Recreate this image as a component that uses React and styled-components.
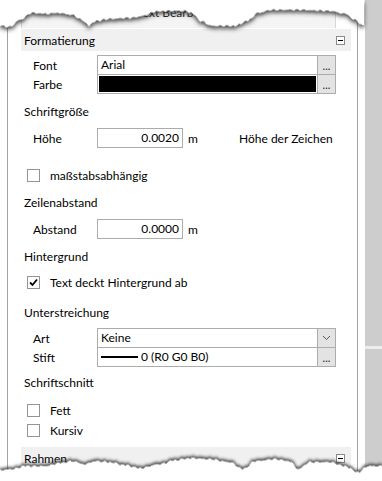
import React from 'react';
import styled, { createGlobalStyle } from 'styled-components';

const GlobalStyle = createGlobalStyle`
  html, body { margin: 0; padding: 0; background: #fff; }
  body {
    font-family: Lato, "Noto Sans", sans-serif;
    font-size: 12px;
    color: #000;
  }
`;

const Screen = styled.div`
  position: relative;
  width: 382px;
  height: 481px;
  overflow: hidden;
  background: #fff;
  display: flex;
`;

const Panel = styled.div`
  margin-left: 7px;
  width: 351px;
  box-sizing: border-box;
  border-left: 1px solid #a3a3a3;
  border-right: 1px solid #a3a3a3;
  padding: 0 6px 0 13px;
  display: flex;
  flex-direction: column;
`;

const TabStrip = styled.div`
  height: 29px;
  display: flex;
  align-items: flex-start;
`;

const Tab = styled.div`
  margin-top: 4px;
  width: 315px;
  height: 24px;
  box-sizing: border-box;
  border: 1px solid #d6d6d6;
  border-bottom: none;
  background: #f4f4f4;
  line-height: 16px;
  text-align: center;
  color: #222;
`;

const SectionHeader = styled.div`
  height: 22px;
  margin-top: ${p => p.$top || 0}px;
  background: #f0f0f0;
  display: flex;
  align-items: center;
  justify-content: space-between;
  padding: 0 6px 0 3px;
  flex-shrink: 0;
`;

const GroupTitle = styled.div`
  height: 20px;
  line-height: 20px;
  padding-left: 3px;
  margin-top: ${p => p.$top}px;
  flex-shrink: 0;
`;

const FieldGroup = styled.div`
  margin-top: ${p => p.$top}px;
  display: flex;
  flex-direction: column;
  flex-shrink: 0;
`;

const Row = styled.div`
  height: 20px;
  display: flex;
  align-items: center;
  margin-top: ${p => p.$top || 0}px;
  flex-shrink: 0;
  & + & { margin-top: -1px; }
`;

const Label = styled.div`
  width: 76px;
  box-sizing: border-box;
  padding-left: 12px;
  flex-shrink: 0;
`;

const FieldBox = styled.div`
  width: 239px;
  height: 20px;
  box-sizing: border-box;
  border: 1px solid #acacac;
  display: flex;
  background: #fff;
`;

const Value = styled.div`
  flex: 1;
  padding: ${p => (p.$fill ? '1px' : '0 3px')};
  line-height: 18px;
  display: flex;
  align-items: center;
  gap: 3px;
  overflow: hidden;
  white-space: nowrap;
`;

const ColorFill = styled.div`
  flex: 1;
  align-self: stretch;
  background: ${p => p.$color};
`;

const PenLine = styled.div`
  width: 37px;
  height: 2px;
  background: #000;
  flex-shrink: 0;
`;

const SideButton = styled.div`
  width: 18px;
  flex-shrink: 0;
  box-sizing: border-box;
  border-left: 1px solid #acacac;
  background: #e3e3e3;
  display: flex;
  align-items: center;
  justify-content: center;
  font-size: 11px;
  line-height: 1;
  color: #222;
`;

const NumberBox = styled.div`
  width: 86px;
  height: 20px;
  box-sizing: border-box;
  border: 1px solid #acacac;
  text-align: right;
  padding-right: 3px;
  line-height: 18px;
  flex-shrink: 0;
`;

const Unit = styled.div`
  width: 56px;
  box-sizing: border-box;
  padding-left: 5px;
  flex-shrink: 0;
`;

const Hint = styled.div`
  white-space: nowrap;
`;

const CheckRow = styled.div`
  height: 20px;
  display: flex;
  align-items: center;
  padding-left: 6px;
  margin-top: ${p => p.$top || 0}px;
  flex-shrink: 0;
`;

const Box = styled.div`
  width: 13px;
  height: 13px;
  box-sizing: border-box;
  border: 1px solid #949494;
  background: #fff;
  display: flex;
  align-items: center;
  justify-content: center;
  flex-shrink: 0;
`;

const CheckLabel = styled.span`
  margin-left: 10px;
`;

const Scrollbar = styled.div`
  margin-left: 7px;
  width: 17px;
  display: flex;
  flex-direction: column;
  background: #cdcdcd;
`;

const Thumb = styled.div`
  height: 346px;
  background: #cdcdcd;
`;

const Track = styled.div`
  flex: 1;
  border-top: 3px solid #ededed;
  background: #cdcdcd;
`;

const Tear = styled.svg`
  position: absolute;
  left: 0;
  ${p => (p.$bottom ? 'bottom: 0;' : 'top: 0;')}
  pointer-events: none;
`;

const Minus = () => (
  <svg width="9" height="9" viewBox="0 0 9 9">
    <rect x="0.5" y="0.5" width="8" height="8" fill="#fff" stroke="#8a8a8a" />
    <rect x="2" y="4" width="5" height="1" fill="#000" />
  </svg>
);

const Chevron = () => (
  <svg width="9" height="6" viewBox="0 0 9 6">
    <path d="M1 1 L4.5 4.5 L8 1" fill="none" stroke="#555" strokeWidth="1" />
  </svg>
);

const Check = () => (
  <svg width="9" height="9" viewBox="0 0 9 9">
    <path d="M1 4.5 L3.5 7 L8 1.5" fill="none" stroke="#000" strokeWidth="1.8" />
  </svg>
);

function jagged(anchors, step, amp, seed) {
  const pts = [];
  for (let i = 0; i < anchors.length - 1; i++) {
    const [x0, y0] = anchors[i];
    const [x1, y1] = anchors[i + 1];
    for (let x = x0; x < x1; x += step) {
      const t = (x - x0) / (x1 - x0);
      const s = (1 - Math.cos(Math.PI * t)) / 2;
      const y =
        y0 + (y1 - y0) * s +
        amp * Math.sin(x * 1.7 + seed) * Math.sin(x * 0.63 + seed * 2);
      pts.push([x, y]);
    }
  }
  pts.push(anchors[anchors.length - 1]);
  return pts;
}

const topAnchors = [
  [0, 26], [10, 27], [20, 20], [32, 13], [45, 14], [58, 13], [72, 15], [82, 20],
  [89, 26], [96, 21], [110, 19], [130, 18], [145, 16], [152, 12], [165, 11],
  [185, 11], [192, 13], [200, 21], [212, 26], [235, 26], [248, 21], [258, 13],
  [272, 10], [300, 10], [330, 11], [345, 14], [355, 20], [362, 25],
];

const bottomAnchors = [
  [0, 470], [12, 469], [25, 466], [45, 466], [60, 463], [72, 461], [85, 464],
  [95, 461], [110, 462], [125, 465], [140, 468], [160, 464], [175, 460],
  [190, 458], [210, 459], [230, 462], [243, 469], [255, 461], [275, 459],
  [290, 461], [298, 469], [310, 462], [330, 462], [345, 466], [358, 472],
  [368, 466], [382, 466],
];

const toD = pts => pts.map(([x, y], i) => `${i ? 'L' : 'M'}${x.toFixed(1)} ${y.toFixed(1)}`).join(' ');

const TopTear = () => {
  const pts = jagged(topAnchors, 2, 1.2, 0.7);
  const edge = toD(pts);
  const d = `${edge} L364 25 L364 0 L0 0 Z`;
  return (
    <Tear width="382" height="40" viewBox="0 0 382 40">
      <defs>
        <filter id="tshadow" x="-5%" y="-20%" width="110%" height="180%">
          <feDropShadow dx="0" dy="2.5" stdDeviation="2.2" floodColor="#333" floodOpacity="0.9" />
        </filter>
      </defs>
      <path d={d} fill="#fff" filter="url(#tshadow)" />
      <path d={edge} fill="none" stroke="#999" strokeWidth="0.8" />
    </Tear>
  );
};

const BottomTear = () => {
  const pts = jagged(bottomAnchors, 2, 1.2, 2.1).map(([x, y]) => [x, y - 441]);
  const edge = toD(pts);
  const d = `${edge} L382 40 L0 40 Z`;
  return (
    <Tear $bottom width="382" height="40" viewBox="0 0 382 40">
      <defs>
        <filter id="bshadow" x="-5%" y="-40%" width="110%" height="160%">
          <feDropShadow dx="0" dy="-2" stdDeviation="1.8" floodColor="#333" floodOpacity="0.85" />
        </filter>
      </defs>
      <path d={d} fill="#fff" filter="url(#bshadow)" />
      <path d={edge} fill="none" stroke="#999" strokeWidth="0.8" />
    </Tear>
  );
};

export default function App() {
  return (
    <>
      <GlobalStyle />
      <Screen>
        <Panel>
          <TabStrip>
            <Tab>Text Bearbeiten</Tab>
          </TabStrip>

          <SectionHeader>
            <span>Formatierung</span>
            <Minus />
          </SectionHeader>

          <FieldGroup $top={4}>
            <Row>
              <Label>Font</Label>
              <FieldBox>
                <Value>Arial</Value>
                <SideButton>...</SideButton>
              </FieldBox>
            </Row>
            <Row>
              <Label>Farbe</Label>
              <FieldBox>
                <Value $fill><ColorFill $color="#000" /></Value>
                <SideButton>...</SideButton>
              </FieldBox>
            </Row>
          </FieldGroup>

          <GroupTitle $top={8}>Schriftgröße</GroupTitle>
          <Row $top={6}>
            <Label>Höhe</Label>
            <NumberBox>0.0020</NumberBox>
            <Unit>m</Unit>
            <Hint>Höhe der Zeichen</Hint>
          </Row>

          <CheckRow $top={17}>
            <Box />
            <CheckLabel>maßstabsabhängig</CheckLabel>
          </CheckRow>

          <GroupTitle $top={8}>Zeilenabstand</GroupTitle>
          <Row $top={6}>
            <Label>Abstand</Label>
            <NumberBox>0.0000</NumberBox>
            <Unit>m</Unit>
          </Row>

          <GroupTitle $top={8}>Hintergrund</GroupTitle>
          <CheckRow $top={5}>
            <Box><Check /></Box>
            <CheckLabel>Text deckt Hintergrund ab</CheckLabel>
          </CheckRow>

          <GroupTitle $top={11}>Unterstreichung</GroupTitle>
          <FieldGroup $top={5}>
            <Row>
              <Label>Art</Label>
              <FieldBox>
                <Value>Keine</Value>
                <SideButton><Chevron /></SideButton>
              </FieldBox>
            </Row>
            <Row>
              <Label>Stift</Label>
              <FieldBox>
                <Value>
                  <PenLine />
                  <span>0 (R0 G0 B0)</span>
                </Value>
                <SideButton>...</SideButton>
              </FieldBox>
            </Row>
          </FieldGroup>

          <GroupTitle $top={6}>Schriftschnitt</GroupTitle>
          <CheckRow $top={7}>
            <Box />
            <CheckLabel>Fett</CheckLabel>
          </CheckRow>
          <CheckRow>
            <Box />
            <CheckLabel>Kursiv</CheckLabel>
          </CheckRow>

          <SectionHeader $top={7}>
            <span>Rahmen</span>
            <Minus />
          </SectionHeader>
        </Panel>

        <Scrollbar>
          <Thumb />
          <Track />
        </Scrollbar>

        <TopTear />
        <BottomTear />
      </Screen>
    </>
  );
}
